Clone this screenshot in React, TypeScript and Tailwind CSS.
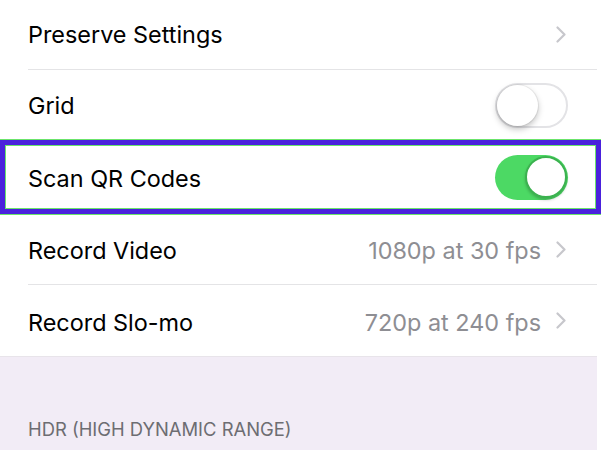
import React from "react";

const Chevron: React.FC = () => (
  <svg width="10" height="17" viewBox="0 0 10 17" className="shrink-0">
    <polyline points="1.5,1.5 8.5,8.5 1.5,15.5" fill="none" stroke="#c7c7cc" strokeWidth="2.2" strokeLinecap="round" strokeLinejoin="round" />
  </svg>
);

const Toggle: React.FC<{ on: boolean }> = ({ on }) =>
  on ? (
    <div className="w-[73px] h-[45px] rounded-full bg-[#4cd964] flex items-center justify-end pr-[1px]">
      <div className="w-[42px] h-[42px] rounded-full bg-white border-[2px] border-[#3bb24f] shadow-[0_2px_3px_rgba(0,0,0,0.2)]" />
    </div>
  ) : (
    <div className="w-[73px] h-[45px] rounded-full bg-white border-[2px] border-[#e3e3e6] flex items-center">
      <div className="w-[41px] h-[41px] rounded-full bg-white shadow-[0_3px_6px_rgba(0,0,0,0.25),0_0_0_1px_rgba(0,0,0,0.06)]" />
    </div>
  );

const App: React.FC = () => {
  return (
    <div className="w-[601px] h-[450px] overflow-hidden bg-white text-black font-['Inter','Helvetica_Neue',sans-serif] text-[23.4px]">
      {/* Preserve Settings */}
      <div className="pl-[28px] pr-[4px]">
        <div className="h-[70px] border-b border-[#e4e4e6] flex items-center justify-between pr-[31px]">
          <span>Preserve Settings</span>
          <Chevron />
        </div>
        <div className="h-[69px] flex items-center justify-between pr-[29px] pt-[2px]">
          <span>Grid</span>
          <Toggle on={false} />
        </div>
      </div>

      {/* highlighted row */}
      <div className="border-y border-[#6be46b]">
        <div className="border-[5px] border-[#4a21dc]">
          <div className="border border-[#6be46b] h-[64px] flex items-center justify-between pl-[22px] pr-[27px]">
            <span className="pt-[3px]">Scan QR Codes</span>
            <Toggle on={true} />
          </div>
        </div>
      </div>

      <div className="pl-[28px] pr-[4px]">
        <div className="h-[70px] border-b border-[#e4e4e6] flex items-center justify-between pr-[31px]">
          <span className="pt-[3px]">Record Video</span>
          <div className="flex items-center gap-[15px]">
            <span className="text-[#8e8e93] pt-[3px]">1080p at 30 fps</span>
            <Chevron />
          </div>
        </div>
        <div className="h-[71px] flex items-center justify-between pr-[31px]">
          <span className="pt-[4px]">Record Slo-mo</span>
          <div className="flex items-center gap-[15px]">
            <span className="text-[#8e8e93] pt-[4px]">720p at 240 fps</span>
            <Chevron />
          </div>
        </div>
      </div>

      {/* section header */}
      <div className="mr-[4px] h-[94px] bg-[#f2ecf6] border-t border-[#e8e4ea] flex items-end pl-[28px] pb-[6px]">
        <span className="text-[18.4px] text-[#6d6d72]">HDR (HIGH DYNAMIC RANGE)</span>
      </div>
    </div>
  );
};

export default App;
